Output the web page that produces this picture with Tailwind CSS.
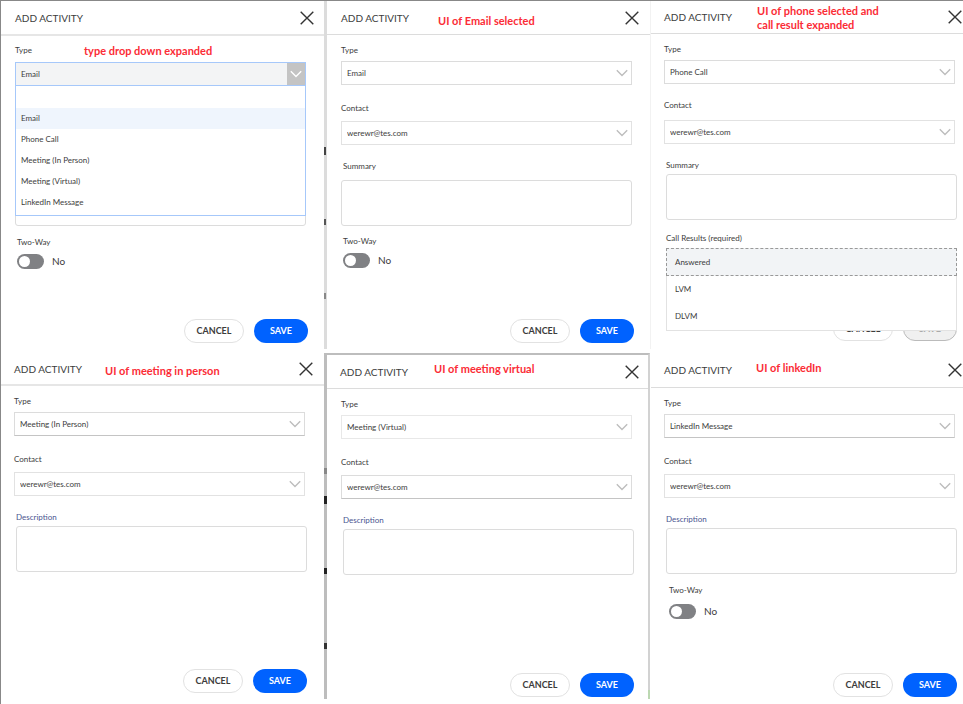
<!DOCTYPE html>
<html lang="en">
<head>
<meta charset="utf-8">
<title>Add activity states</title>
<script src="https://cdn.jsdelivr.net/npm/@tailwindcss/browser@4"></script>
</head>
<body class="bg-white font-['Lato',sans-serif] text-[8px] leading-4 text-[#3c3c3c]">
<svg class="hidden">
  <symbol id="close" viewBox="0 0 14 14"><path d="M0.7 0.7L13.3 13.3M13.3 0.7L0.7 13.3" fill="none" stroke="#333" stroke-width="1.4"/></symbol>
  <symbol id="chevron" viewBox="0 0 12 8"><path d="M0.8 1.2L6 6.4L11.2 1.2" fill="none" stroke="currentColor" stroke-width="1.4"/></symbol>
</svg>
<main class="grid min-h-screen grid-cols-[326fr_324fr_312fr] grid-rows-[352fr_346fr] border-t border-l border-[#888] pb-[5px]">

  <!-- Type list open -->
  <section class="relative mb-1 flex flex-col border-r-3 border-[#dcdcdc]">
    <header class="flex h-[35px] items-center justify-between border-b-2 border-[#e6e6e6] pr-[10px] pl-[14px]">
      <h2 class="text-[10px]">ADD ACTIVITY</h2>
      <button aria-label="Close"><svg class="size-[14px]"><use href="#close"/></svg></button>
    </header>
    <p class="absolute top-[43px] left-[83px] text-[11px] leading-[14px] font-bold text-[#fb2c36]">type drop down expanded</p>
    <div class="flex flex-col pt-[6px] pr-[18px] pl-[14px]">
      <label for="t1">Type</label>
      <div class="relative mt-1">
        <select id="t1" class="block h-6 w-full appearance-none border border-[#a6c8fa] bg-[#f3f4f5] pl-[5px]"><option>Email</option></select>
        <span class="pointer-events-none absolute top-px right-px flex h-[22px] w-[18px] items-center justify-center bg-[#c4c4c4] text-white"><svg class="h-2 w-3"><use href="#chevron"/></svg></span>
        <ul role="listbox" aria-label="Type" class="absolute top-[23px] right-0 left-0 z-10 border border-[#a6c8fa] bg-white pb-0.5 leading-[21px]">
          <li role="option" aria-label="None" class="h-[22px]"></li>
          <li role="option" class="bg-[#eff5fd] pl-[5px]">Email</li>
          <li role="option" class="pl-[5px]">Phone Call</li>
          <li role="option" class="pl-[5px]">Meeting (In Person)</li>
          <li role="option" class="pl-[5px]">Meeting (Virtual)</li>
          <li role="option" class="pl-[5px]">LinkedIn Message</li>
        </ul>
      </div>
      <select aria-label="Contact" class="mt-[35px] block h-6 w-full appearance-none border border-[#e2e2e2] pl-[5px]"></select>
      <textarea aria-label="Summary" class="mt-[35px] block h-[46px] w-full resize-none rounded-[3px] border border-[#dcdcdc]"></textarea>
      <label for="w1" class="mt-2 ml-0.5">Two-Way</label>
      <div class="mt-[3px] ml-0.5 flex items-center gap-2">
        <input id="w1" type="checkbox" class="h-[15px] w-[27px] appearance-none rounded-full bg-[#808184] p-[2px] before:block before:size-[11px] before:rounded-full before:bg-white">
        <span class="text-[10px]">No</span>
      </div>
    </div>
    <footer class="mt-auto flex justify-end gap-[10px] pr-4 pb-[6px] text-[9px] font-bold">
      <button class="h-6 w-[60px] rounded-full border border-[#e2e2e2] bg-white">CANCEL</button>
      <button class="h-6 w-[54px] rounded-full bg-[#0062ff] text-white">SAVE</button>
    </footer>
    <i class="absolute top-[146px] -right-[2px] h-2 w-[2px] bg-[#444]"></i>
    <i class="absolute top-[218px] -right-[2px] h-[6px] w-[2px] bg-[#555]"></i>
    <i class="absolute top-[292px] -right-[2px] h-[6px] w-[2px] bg-[#888]"></i>
  </section>

  <!-- Email -->
  <section class="relative mb-1 flex flex-col border-r border-[#f2f2f2]">
    <header class="flex h-[34px] items-center justify-between border-b border-[#dcdcdc] pr-[11px] pl-[14px]">
      <h2 class="text-[10px]">ADD ACTIVITY</h2>
      <button aria-label="Close"><svg class="size-[14px]"><use href="#close"/></svg></button>
    </header>
    <p class="absolute top-[13px] left-[111px] text-[11px] leading-[14px] font-bold text-[#fb2c36]">UI of Email selected</p>
    <div class="flex flex-col pt-[7px] pr-[18px] pl-[14px]">
      <label for="t2">Type</label>
      <div class="relative mt-[3px]">
        <select id="t2" class="block h-6 w-full appearance-none border border-[#dcdcdc] pl-[5px]"><option>Email</option></select>
        <svg class="pointer-events-none absolute top-2 right-1 h-2 w-3 text-[#bdbdbd]"><use href="#chevron"/></svg>
      </div>
      <label for="c2" class="mt-[15px]">Contact</label>
      <div class="relative mt-[5px]">
        <select id="c2" class="block h-6 w-full appearance-none border border-[#e2e2e2] pl-[5px]"><option>werewr@tes.com</option></select>
        <svg class="pointer-events-none absolute top-2 right-1 h-2 w-3 text-[#bdbdbd]"><use href="#chevron"/></svg>
      </div>
      <label for="s2" class="mt-[13px] ml-0.5">Summary</label>
      <textarea id="s2" class="mt-[6px] block h-[46px] w-full resize-none rounded-[3px] border border-[#dcdcdc]"></textarea>
      <label for="w2" class="mt-[7px] ml-0.5">Two-Way</label>
      <div class="mt-[3px] ml-0.5 flex items-center gap-2">
        <input id="w2" type="checkbox" class="h-[15px] w-[27px] appearance-none rounded-full bg-[#808184] p-[2px] before:block before:size-[11px] before:rounded-full before:bg-white">
        <span class="text-[10px]">No</span>
      </div>
    </div>
    <footer class="mt-auto flex justify-end gap-[10px] pr-4 pb-[6px] text-[9px] font-bold">
      <button class="h-6 w-[60px] rounded-full border border-[#e2e2e2] bg-white">CANCEL</button>
      <button class="h-6 w-[54px] rounded-full bg-[#0062ff] text-white">SAVE</button>
    </footer>
  </section>

  <!-- Phone call, result list open -->
  <section class="relative mb-1 flex flex-col">
    <header class="flex h-[33px] items-center justify-between border-b border-[#dcdcdc] pr-px pl-[13px]">
      <h2 class="text-[10px]">ADD ACTIVITY</h2>
      <button aria-label="Close"><svg class="size-[14px]"><use href="#close"/></svg></button>
    </header>
    <p class="absolute top-[3px] left-[106px] text-[11px] leading-[14px] font-bold text-[#fb2c36]">UI of phone selected and<br>call result expanded</p>
    <div class="flex flex-col pt-[7px] pr-2 pl-[13px]">
      <label for="t3">Type</label>
      <div class="relative mt-[3px]">
        <select id="t3" class="block h-6 w-full appearance-none border border-[#dcdcdc] pl-[5px]"><option>Phone Call</option></select>
        <svg class="pointer-events-none absolute top-2 right-1 h-2 w-3 text-[#bdbdbd]"><use href="#chevron"/></svg>
      </div>
      <label for="c3" class="mt-[13px]">Contact</label>
      <div class="relative mt-[7px]">
        <select id="c3" class="block h-6 w-full appearance-none border border-[#e2e2e2] pl-[5px]"><option>werewr@tes.com</option></select>
        <svg class="pointer-events-none absolute top-2 right-1 h-2 w-3 text-[#bdbdbd]"><use href="#chevron"/></svg>
      </div>
      <div class="-mr-0.5 ml-0.5 flex flex-col">
        <label for="s3" class="mt-[13px]">Summary</label>
        <textarea id="s3" class="mt-px block h-[46px] w-full resize-none rounded-[3px] border border-[#dcdcdc]"></textarea>
        <div class="relative mt-[10px]">
          <p id="r3">Call Results (required)</p>
          <ul role="listbox" aria-labelledby="r3" class="absolute top-[18px] right-0 left-0 z-10 border border-[#e2e2e2] bg-white leading-[27px]">
            <li role="option" class="-mx-px -mt-px border border-dashed border-[#999] bg-[#f2f4f6] pl-2 leading-[26px]">Answered</li>
            <li role="option" class="pl-2">LVM</li>
            <li role="option" class="pl-2">DLVM</li>
          </ul>
        </div>
      </div>
    </div>
    <footer class="mt-auto flex justify-end gap-[10px] pr-[6px] pb-2 text-[9px] font-bold">
      <button class="h-6 w-[60px] rounded-full border border-[#e2e2e2] bg-white">CANCEL</button>
      <button disabled class="h-6 w-[54px] rounded-full border border-[#bbb] bg-[#f0f0f0] text-[#aaa]">SAVE</button>
    </footer>
  </section>

  <!-- Meeting in person -->
  <section class="relative flex flex-col border-r-3 border-[#bdbdbd]">
    <header class="flex h-[33px] items-center justify-between border-b-2 border-[#e6e6e6] pr-[11px] pl-[13px]">
      <h2 class="text-[10px]">ADD ACTIVITY</h2>
      <button aria-label="Close"><svg class="size-[14px]"><use href="#close"/></svg></button>
    </header>
    <p class="absolute top-[11px] left-[104px] text-[11px] leading-[14px] font-bold text-[#fb2c36]">UI of meeting in person</p>
    <div class="flex flex-col pt-[7px] pr-[19px] pl-[13px]">
      <label for="t4">Type</label>
      <div class="relative mt-[3px]">
        <select id="t4" class="block h-6 w-full appearance-none border border-[#dcdcdc] border-b-[#c4c4c4] pl-[5px]"><option>Meeting (In Person)</option></select>
        <svg class="pointer-events-none absolute top-2 right-1 h-2 w-3 text-[#bdbdbd]"><use href="#chevron"/></svg>
      </div>
      <label for="c4" class="mt-[15px]">Contact</label>
      <div class="relative mt-[5px]">
        <select id="c4" class="block h-6 w-full appearance-none border border-[#e2e2e2] pl-[5px]"><option>werewr@tes.com</option></select>
        <svg class="pointer-events-none absolute top-2 right-1 h-2 w-3 text-[#bdbdbd]"><use href="#chevron"/></svg>
      </div>
      <div class="-mr-0.5 ml-0.5 flex flex-col">
        <label for="s4" class="mt-[13px] text-[#4a5590]">Description</label>
        <textarea id="s4" class="mt-px block h-[46px] w-full resize-none rounded-[3px] border border-[#dcdcdc]"></textarea>
      </div>
    </div>
    <footer class="mt-auto flex justify-end gap-[10px] pr-[17px] pb-[6px] text-[9px] font-bold">
      <button class="h-6 w-[60px] rounded-full border border-[#e2e2e2] bg-white">CANCEL</button>
      <button class="h-6 w-[54px] rounded-full bg-[#0062ff] text-white">SAVE</button>
    </footer>
    <i class="absolute top-[115px] -right-[3px] h-[6px] w-[3px] bg-[#888]"></i>
    <i class="absolute top-[143px] -right-[3px] h-2 w-[3px] bg-[#222]"></i>
    <i class="absolute top-[215px] -right-[3px] h-[6px] w-[3px] bg-[#222]"></i>
    <i class="absolute top-[290px] -right-[3px] h-[6px] w-[3px] bg-[#333]"></i>
  </section>

  <!-- Meeting virtual -->
  <section class="relative mr-px flex flex-col border-t-2 border-r-2 border-t-[#bdbdbd] border-r-[#d2d2d2]">
    <header class="flex h-[34px] items-center justify-between border-b border-[#dcdcdc] pr-[9px] pl-[13px]">
      <h2 class="text-[10px]">ADD ACTIVITY</h2>
      <button aria-label="Close"><svg class="size-[14px]"><use href="#close"/></svg></button>
    </header>
    <p class="absolute top-[7px] left-[107px] text-[11px] leading-[14px] font-bold text-[#fb2c36]">UI of meeting virtual</p>
    <div class="flex flex-col pt-[7px] pr-4 pl-[14px]">
      <label for="t5">Type</label>
      <div class="relative mt-[3px]">
        <select id="t5" class="block h-6 w-full appearance-none border border-[#e8e8e8] pl-[5px]"><option>Meeting (Virtual)</option></select>
        <svg class="pointer-events-none absolute top-2 right-1 h-2 w-3 text-[#bdbdbd]"><use href="#chevron"/></svg>
      </div>
      <label for="c5" class="mt-[15px]">Contact</label>
      <div class="relative mt-[5px]">
        <select id="c5" class="block h-6 w-full appearance-none border border-[#dcdcdc] border-b-[#c4c4c4] pl-[5px]"><option>werewr@tes.com</option></select>
        <svg class="pointer-events-none absolute top-2 right-1 h-2 w-3 text-[#bdbdbd]"><use href="#chevron"/></svg>
      </div>
      <div class="-mr-0.5 ml-0.5 flex flex-col">
        <label for="s5" class="mt-[13px] text-[#4a5590]">Description</label>
        <textarea id="s5" class="mt-px block h-[46px] w-full resize-none rounded-[3px] border border-[#dcdcdc]"></textarea>
      </div>
    </div>
    <footer class="mt-auto flex justify-end gap-[10px] pr-[14px] pb-0.5 text-[9px] font-bold">
      <button class="h-6 w-[60px] rounded-full border border-[#e2e2e2] bg-white">CANCEL</button>
      <button class="h-6 w-[54px] rounded-full bg-[#0062ff] text-white">SAVE</button>
    </footer>
    <i class="absolute -right-[2px] bottom-0 h-[9px] w-[2px] bg-[#bcd8b2]"></i>
  </section>

  <!-- LinkedIn -->
  <section class="relative flex flex-col">
    <header class="flex h-[35px] items-center justify-between border-b border-[#dcdcdc] pr-px pl-[13px]">
      <h2 class="text-[10px]">ADD ACTIVITY</h2>
      <button aria-label="Close"><svg class="size-[14px]"><use href="#close"/></svg></button>
    </header>
    <p class="absolute top-2 left-[105px] text-[11px] leading-[14px] font-bold text-[#fb2c36]">UI of linkedIn</p>
    <div class="flex flex-col pt-[7px] pr-2 pl-[13px]">
      <label for="t6">Type</label>
      <div class="relative mt-[3px]">
        <select id="t6" class="block h-6 w-full appearance-none border border-[#dcdcdc] border-b-[#c4c4c4] pl-[5px]"><option>LinkedIn Message</option></select>
        <svg class="pointer-events-none absolute top-2 right-1 h-2 w-3 text-[#bdbdbd]"><use href="#chevron"/></svg>
      </div>
      <label for="c6" class="mt-[15px]">Contact</label>
      <div class="relative mt-[5px]">
        <select id="c6" class="block h-6 w-full appearance-none border border-[#e2e2e2] pl-[5px]"><option>werewr@tes.com</option></select>
        <svg class="pointer-events-none absolute top-2 right-1 h-2 w-3 text-[#bdbdbd]"><use href="#chevron"/></svg>
      </div>
      <div class="-mr-0.5 ml-0.5 flex flex-col">
        <label for="s6" class="mt-[13px] text-[#4a5590]">Description</label>
        <textarea id="s6" class="mt-px block h-[46px] w-full resize-none rounded-[3px] border border-[#dcdcdc]"></textarea>
        <label for="w6" class="mt-2 ml-[3px]">Two-Way</label>
        <div class="mt-[5px] ml-[3px] flex items-center gap-2">
          <input id="w6" type="checkbox" class="h-[15px] w-[27px] appearance-none rounded-full bg-[#808184] p-[2px] before:block before:size-[11px] before:rounded-full before:bg-white">
          <span class="text-[10px]">No</span>
        </div>
      </div>
    </div>
    <footer class="mt-auto flex justify-end gap-[10px] pr-[6px] pb-0.5 text-[9px] font-bold">
      <button class="h-6 w-[60px] rounded-full border border-[#e2e2e2] bg-white">CANCEL</button>
      <button class="h-6 w-[54px] rounded-full bg-[#0062ff] text-white">SAVE</button>
    </footer>
  </section>
</main>
</body>
</html>
